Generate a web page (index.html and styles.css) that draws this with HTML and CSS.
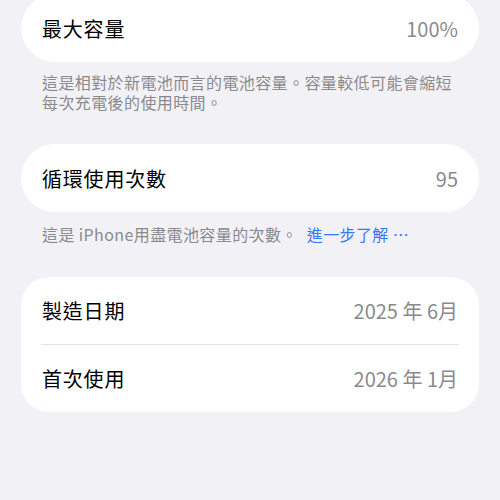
FILE: index.html
```html
<!DOCTYPE html>
<html lang="zh-Hant">
<head>
    <meta charset="UTF-8">
    <meta name="viewport" content="width=device-width, initial-scale=1.0">
    <title>電池健康度</title>
    <link rel="stylesheet" href="styles.css">
</head>
<body>
    <div class="page">
        <div class="card card-first">
            <div class="row">
                <span class="label">最大容量</span>
                <span class="value">100%</span>
            </div>
        </div>
        <p class="note">這是相對於新電池而言的電池容量。容量較低可能會縮短每次充電後的使用時間。</p>

        <div class="card">
            <div class="row">
                <span class="label">循環使用次數</span>
                <span class="value">95</span>
            </div>
        </div>
        <p class="note note-single">這是 iPhone用盡電池容量的次數。 <a href="#" class="link">進一步了解 ⋯</a></p>

        <div class="card card-group">
            <div class="row">
                <span class="label">製造日期</span>
                <span class="value">2025 年 6月</span>
            </div>
            <div class="divider"></div>
            <div class="row">
                <span class="label">首次使用</span>
                <span class="value">2026 年 1月</span>
            </div>
        </div>
    </div>
</body>
</html>
```

FILE: styles.css
```css
* { margin: 0; padding: 0; box-sizing: border-box; }
body {
    font-family: "Noto Sans CJK TC", "Noto Sans", sans-serif;
    background-color: #f2f1f6;
    min-height: 100vh;
}
.page { padding: 0 21px; margin-top: -6px; }
.card {
    background-color: #fff;
    border-radius: 34px;
    display: flex;
    flex-direction: column;
}
.card-group { border-radius: 28px; }
.row {
    height: 68px;
    padding: 0 21px;
    display: flex;
    justify-content: space-between;
    align-items: center;
}
.card-group .row { height: 67px; }
.label { font-size: 20px; color: #000; letter-spacing: 0.8px; }
.value { font-size: 20px; color: #8a8a8e; }
.divider { height: 1px; background-color: #e3e3e6; margin: 0 20px; }
.note {
    font-size: 16px;
    line-height: 20px;
    color: #8a8a8e;
    padding: 10px 21px 32px;
    letter-spacing: 0.4px;
}
.note-single { padding-top: 12px; padding-bottom: 33px; }
.link { color: #3478f6; text-decoration: none; margin-left: 5px; }
```
